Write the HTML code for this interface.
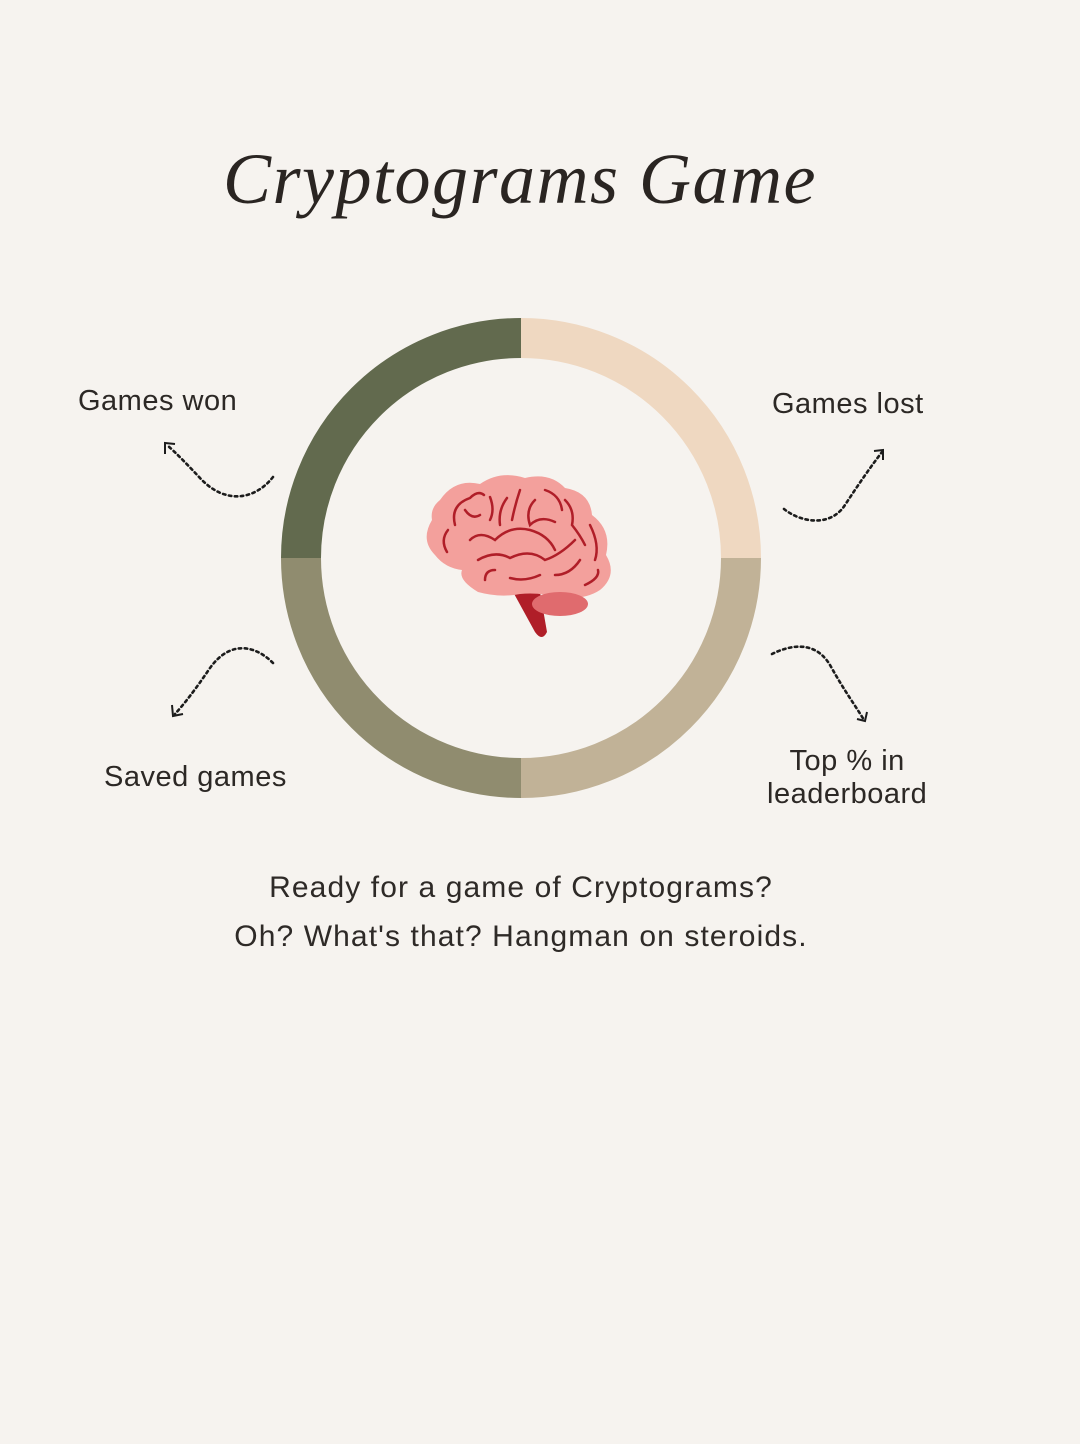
<!DOCTYPE html>
<html><head><meta charset="utf-8"><style>
html,body{margin:0;padding:0}
body{width:1080px;height:1444px;background:#f6f3ef;position:relative;overflow:hidden;font-family:"Liberation Sans",sans-serif;color:#2a2522}
.t{position:absolute;white-space:nowrap;font-size:29px;letter-spacing:0.5px;color:#2c2825}
h1{position:absolute;margin:0;left:0;width:1040px;text-align:center;top:138px;font-family:"Liberation Serif",serif;font-style:italic;font-weight:normal;font-size:72px;color:#2a2522;letter-spacing:1.5px}
.p{position:absolute;left:0;width:1042px;text-align:center;font-size:30px;color:#2e2a27;letter-spacing:1.1px}
</style></head><body>
<h1>Cryptograms Game</h1>
<svg width="1080" height="1444" style="position:absolute;left:0;top:0">
<g fill="none" stroke-width="40">
<path d="M301 558 A220 220 0 0 1 521 338" stroke="#626a4e"/>
<path d="M521 338 A220 220 0 0 1 741 558" stroke="#efd8c1"/>
<path d="M741 558 A220 220 0 0 1 521 778" stroke="#c1b297"/>
<path d="M521 778 A220 220 0 0 1 301 558" stroke="#908c6f"/>
</g>
<g fill="none" stroke="#1c1c1c" stroke-width="2.6" stroke-dasharray="2.5 3.5" stroke-linecap="round">
<path d="M273 477 C255 500 225 505 200 478 C185 462 175 452 167 445"/>
<path d="M273 663 C255 645 230 640 210 668 C195 690 185 703 175 714"/>
<path d="M784 509 C800 522 830 528 845 505 C860 482 872 465 882 452"/>
<path d="M772 654 C790 645 815 640 830 665 C845 692 855 705 864 720"/>
</g>
<g fill="none" stroke="#1c1c1c" stroke-width="2">
<path d="M165 454 L165 443 L175 444"/>
<path d="M172 705 L173 716 L183 714"/>
<path d="M874 451 L883 450 L883 460"/>
<path d="M857 719 L865 721 L867 712"/>
</g>
<path d="M512 590 L535 632 Q542 642 547 632 L540 592 Z" fill="#b01e28"/>
<path d="M440 500 Q455 478 480 484 Q500 470 525 478 Q550 472 565 488 Q590 492 592 515 Q612 530 606 555 Q618 575 600 590 Q585 600 560 598 Q540 592 520 594 Q500 598 478 592 Q458 580 462 570 Q445 568 435 555 Q420 540 432 520 Q430 508 440 500 Z" fill="#f3a09c"/>
<ellipse cx="560" cy="604" rx="28" ry="12" fill="#e06b6e"/>
<g fill="none" stroke="#b01e28" stroke-width="2.5" stroke-linecap="round">
<path d="M455 525 Q450 505 470 498 Q478 490 484 495"/>
<path d="M448 530 Q440 540 447 552"/>
<path d="M465 510 Q472 520 480 515"/>
<path d="M490 497 Q495 510 490 520"/>
<path d="M507 498 Q498 510 500 525"/>
<path d="M520 490 Q515 505 512 520"/>
<path d="M535 500 Q525 510 530 525 Q540 515 555 522"/>
<path d="M545 490 Q560 495 562 510"/>
<path d="M565 500 Q575 510 572 525 Q580 535 585 545"/>
<path d="M470 540 Q480 530 495 540 Q510 525 530 530 Q548 535 555 550"/>
<path d="M478 560 Q495 550 510 558 Q530 548 545 560 Q560 555 575 540"/>
<path d="M485 580 Q485 570 495 570"/>
<path d="M510 578 Q525 582 540 575"/>
<path d="M555 575 Q570 575 580 560"/>
<path d="M590 525 Q600 545 595 560"/>
<path d="M585 585 Q600 578 598 570"/>
</g>
</svg>
<div class="t" style="left:78px;top:385px">Games won</div>
<div class="t" style="left:772px;top:388px">Games lost</div>
<div class="t" style="left:104px;top:761px">Saved games</div>
<div class="t" style="left:767px;top:745px;text-align:center;line-height:33px">Top % in<br>leaderboard</div>
<div class="p" style="top:871px">Ready for a game of Cryptograms?</div>
<div class="p" style="top:920px">Oh? What's that? Hangman on steroids.</div>
</body></html>
